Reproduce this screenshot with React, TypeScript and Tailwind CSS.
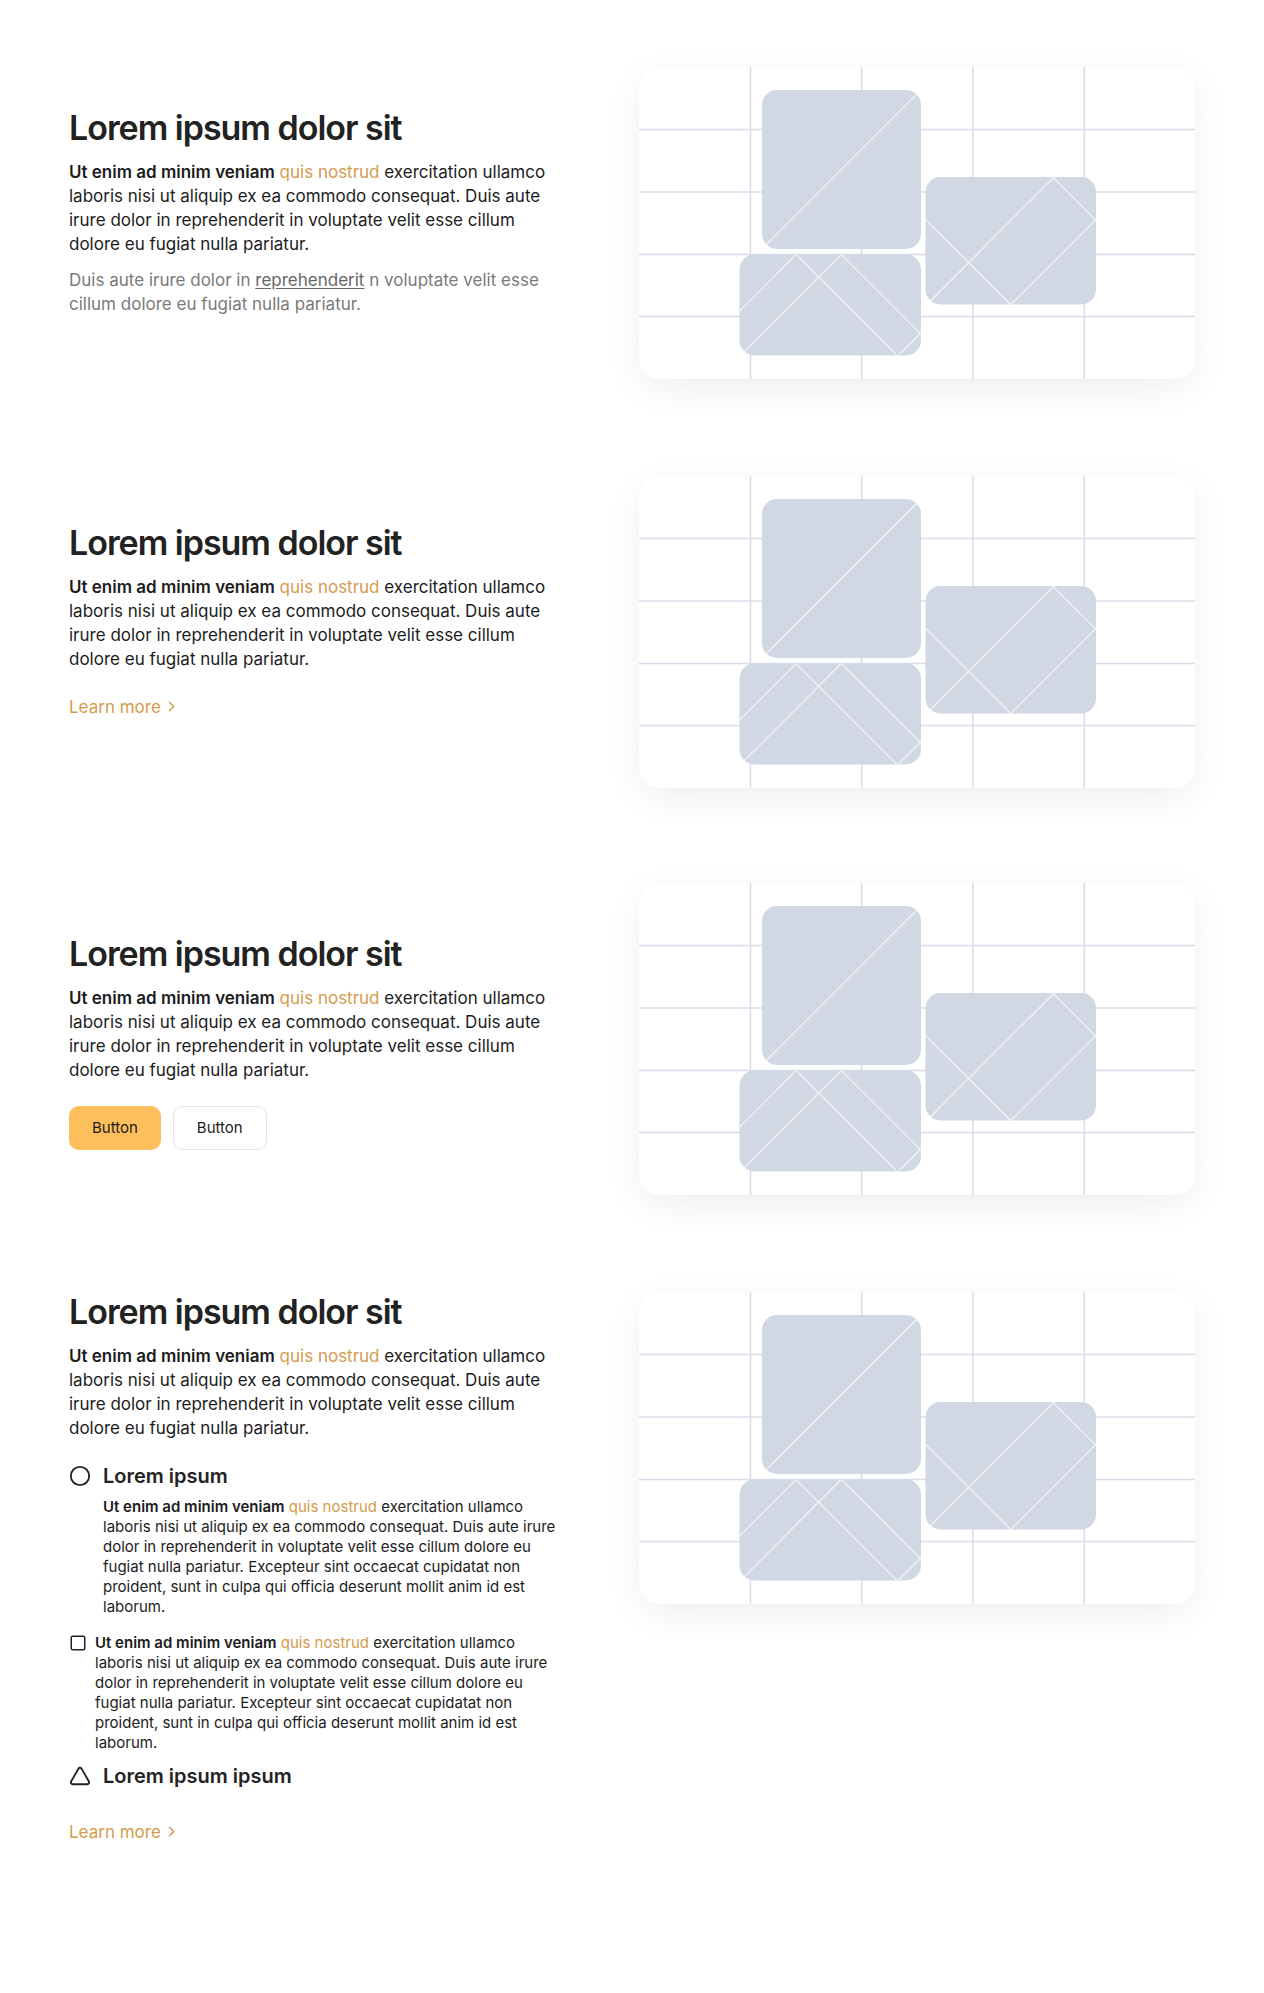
import { useId } from "react";
import { ChevronRight, Circle, Square, Triangle } from "lucide-react";

function Illustration({ className = "" }: { className?: string }) {
  const id = useId().replace(/:/g, "");
  const W = 556;
  const H = 312;
  const vx = [111.5, 222.7, 333.9, 445.3];
  const hy = [62.5, 124.9, 187.4, 249.6];
  const shapes = [
    { x: 123, y: 23, w: 159, h: 159 },
    { x: 100.5, y: 187.5, w: 181.5, h: 101 },
    { x: 286.5, y: 110, w: 170.5, h: 127.5 },
  ];
  const plus = (c: number) => ({ x1: c - 400, y1: 400, x2: c + 100, y2: -100 });
  const minus = (c: number) => ({ x1: c - 100, y1: -100, x2: c + 400, y2: 400 });
  const lines: { x1: number; y1: number; x2: number; y2: number }[][] = [
    [plus(305)],
    [plus(344.6), minus(-30.4), minus(14.8), plus(389.8), plus(547.6)],
    [minus(134.2), plus(525.2), minus(303.6), plus(609.4)],
  ];
  return (
    <div
      className={`w-[556px] h-[312px] shrink-0 overflow-hidden rounded-[20px] bg-white shadow-[0_10px_40px_-6px_rgba(0,0,0,0.09)] ${className}`}
    >
      <svg width={W} height={H} viewBox={`0 0 ${W} ${H}`} className="block">
        <defs>
          {shapes.map((s, i) => (
            <clipPath id={`${id}-c${i}`} key={i}>
              <rect x={s.x} y={s.y} width={s.w} height={s.h} rx={15} />
            </clipPath>
          ))}
        </defs>
        {vx.map((x) => (
          <line key={`v${x}`} x1={x} y1={0} x2={x} y2={H} stroke="#d6dce8" strokeWidth={1.5} />
        ))}
        {hy.map((y) => (
          <line key={`h${y}`} x1={0} y1={y} x2={W} y2={y} stroke="#d6dce8" strokeWidth={1.5} />
        ))}
        {shapes.map((s, i) => (
          <g key={i}>
            <rect x={s.x} y={s.y} width={s.w} height={s.h} rx={15} fill="#d1d8e4" />
            <g clipPath={`url(#${id}-c${i})`}>
              {lines[i].map((l, j) => (
                <line key={j} {...l} stroke="#f1f3f7" strokeWidth={1.3} />
              ))}
            </g>
          </g>
        ))}
      </svg>
    </div>
  );
}

function Heading() {
  return (
    <h2 className="text-[34px] font-semibold leading-10 tracking-[-0.03em] text-[#222222]">
      Lorem ipsum dolor sit
    </h2>
  );
}

function Intro() {
  return (
    <p className="mt-3 text-[17px] leading-6 text-[#1c1c1c]">
      <span className="font-semibold">Ut enim ad minim veniam</span>{" "}
      <span className="text-[#d59b4c]">quis nostrud</span> exercitation ullamco laboris nisi ut
      aliquip ex ea commodo consequat. Duis aute irure dolor in reprehenderit in voluptate velit
      esse cillum dolore eu fugiat nulla pariatur.
    </p>
  );
}

function LearnMore({ className = "" }: { className?: string }) {
  return (
    <a href="#" className={`flex items-center gap-0.5 text-[17px] leading-6 text-[#d59b4c] ${className}`}>
      Learn more
      <ChevronRight size={17} strokeWidth={2} />
    </a>
  );
}

function LongText() {
  return (
    <>
      <span className="font-semibold">Ut enim ad minim veniam</span>{" "}
      <span className="text-[#d59b4c]">quis nostrud</span> exercitation ullamco laboris nisi ut
      aliquip ex ea commodo consequat. Duis aute irure dolor in reprehenderit in voluptate velit
      esse cillum dolore eu fugiat nulla pariatur. Excepteur sint occaecat cupidatat non proident,
      sunt in culpa qui officia deserunt mollit anim id est laborum.
    </>
  );
}

export default function App() {
  return (
    <div className="min-h-[1993px] bg-white font-['Inter',sans-serif] text-[#1c1c1c] antialiased">
      <div className="flex flex-col px-[69px] pt-[67px] pb-[150px]">
        {/* Section 1 */}
        <section className="flex items-start justify-between">
          <div className="w-[494px] pt-[41px]">
            <Heading />
            <Intro />
            <p className="mt-3 text-[17px] leading-6 text-[#7a7a7a]">
              Duis aute irure dolor in{" "}
              <span className="text-[#666666] underline underline-offset-2">reprehenderit</span> n
              voluptate velit esse cillum dolore eu fugiat nulla pariatur.
            </p>
          </div>
          <Illustration />
        </section>

        {/* Section 2 */}
        <section className="mt-[97px] flex items-start justify-between">
          <div className="w-[494px] pt-[46.5px]">
            <Heading />
            <Intro />
            <LearnMore className="mt-6" />
          </div>
          <Illustration />
        </section>

        {/* Section 3 */}
        <section className="mt-[95px] flex items-start justify-between">
          <div className="w-[494px] pt-[50.5px]">
            <Heading />
            <Intro />
            <div className="mt-6 flex gap-3">
              <button className="rounded-[10px] bg-[#ffbe5c] px-[23px] py-3 text-[15px] leading-5 text-[#1c1c1c]">
                Button
              </button>
              <button className="rounded-[10px] border border-[#e6e6e6] bg-white px-[23px] py-[11px] text-[15px] leading-5 text-[#1c1c1c]">
                Button
              </button>
            </div>
          </div>
          <Illustration />
        </section>

        {/* Section 4 */}
        <section className="mt-[94px] flex items-start justify-between">
          <div className="w-[494px] pt-[2.5px]">
            <Heading />
            <Intro />
            <div className="mt-[22px]">
              <div className="flex items-center gap-3">
                <Circle size={22} strokeWidth={2} className="shrink-0 text-[#222222]" />
                <h3 className="text-xl font-semibold leading-7 text-[#222222]">Lorem ipsum</h3>
              </div>
              <p className="mt-[7px] pl-[34px] text-[15px] leading-5 text-[#1c1c1c]">
                <LongText />
              </p>
            </div>
            <div className="mt-4 flex items-start gap-2">
              <Square size={18} strokeWidth={2} className="mt-[1px] shrink-0 text-[#222222]" />
              <p className="text-[15px] leading-5 text-[#1c1c1c]">
                <LongText />
              </p>
            </div>
            <div className="mt-[9px] flex items-center gap-3">
              <Triangle size={22} strokeWidth={2} className="shrink-0 text-[#222222]" />
              <h3 className="text-xl font-semibold leading-7 text-[#222222]">Lorem ipsum ipsum</h3>
            </div>
            <LearnMore className="mt-[30px]" />
          </div>
          <Illustration className="mt-[3px]" />
        </section>
      </div>
    </div>
  );
}
